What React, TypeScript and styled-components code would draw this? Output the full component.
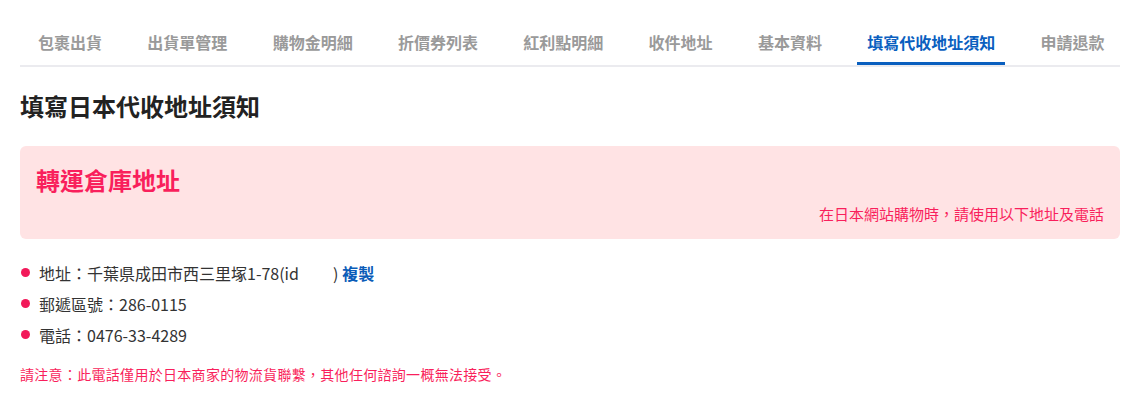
import React from "react";
import styled, { createGlobalStyle } from "styled-components";

const GlobalStyle = createGlobalStyle`
  html, body {
    margin: 0;
    padding: 0;
    background: #ffffff;
  }
  body {
    font-family: "Noto Sans CJK TC", "Noto Sans", sans-serif;
    color: #333333;
  }
`;

const Page = styled.div`
  padding: 0 28px 0 20px;
  width: 1100px;
`;

const Tabs = styled.nav`
  display: flex;
  gap: 25.3px;
  margin-top: 22px;
  padding-left: 8px;
  border-bottom: 2px solid #ebebef;
`;

const Tab = styled.a<{ $active?: boolean }>`
  display: block;
  padding: 0 10px;
  line-height: 40px;
  font-size: 16px;
  font-weight: 700;
  color: ${(p) => (p.$active ? "#0a5fbf" : "#9a9a9a")};
  border-bottom: 3px solid ${(p) => (p.$active ? "#0a5fbf" : "transparent")};
  text-decoration: none;
  white-space: nowrap;
  cursor: pointer;
`;

const Title = styled.h1`
  margin: 23px 0 0;
  font-size: 24px;
  line-height: 32px;
  font-weight: 700;
  color: #222222;
`;

const Notice = styled.section`
  margin-top: 24px;
  padding: 18px 16px 15px;
  background: #ffe3e4;
  border-radius: 6px;
  display: flex;
  flex-direction: column;
  gap: 8px;
`;

const NoticeTitle = styled.h2`
  margin: 0;
  font-size: 24px;
  line-height: 32px;
  font-weight: 700;
  color: #f91f5c;
`;

const NoticeSub = styled.p`
  margin: 0;
  text-align: right;
  font-size: 15px;
  line-height: 20px;
  color: #f91f5c;
`;

const List = styled.ul`
  list-style: none;
  margin: 19px 0 0;
  padding: 0;
`;

const Item = styled.li`
  display: flex;
  align-items: center;
  gap: 9px;
  font-size: 16px;
  line-height: 31px;
  color: #333333;
`;

const Bullet = styled.span`
  flex: none;
  width: 9px;
  height: 9px;
  margin-left: 1px;
  margin-top: -3px;
  border-radius: 50%;
  background: #f2195a;
`;

const Masked = styled.span`
  display: inline-block;
  width: 34px;
`;

const CopyLink = styled.a`
  margin-left: 4px;
  font-weight: 700;
  color: #0a5cb8;
  text-decoration: none;
  cursor: pointer;
`;

const Caution = styled.p`
  margin: 13px 0 0;
  font-size: 14px;
  line-height: 20px;
  letter-spacing: 0.3px;
  color: #f91f5c;
`;

const tabs = [
  "包裹出貨",
  "出貨單管理",
  "購物金明細",
  "折價券列表",
  "紅利點明細",
  "收件地址",
  "基本資料",
  "填寫代收地址須知",
  "申請退款",
];

export default function App() {
  return (
    <>
      <GlobalStyle />
      <Page>
        <Tabs>
          {tabs.map((t) => (
            <Tab key={t} $active={t === "填寫代收地址須知"}>
              {t}
            </Tab>
          ))}
        </Tabs>
        <Title>填寫日本代收地址須知</Title>
        <Notice>
          <NoticeTitle>轉運倉庫地址</NoticeTitle>
          <NoticeSub>在日本網站購物時，請使用以下地址及電話</NoticeSub>
        </Notice>
        <List>
          <Item>
            <Bullet />
            <span>
              地址：千葉県成田市西三里塚1-78(id<Masked />)
              <CopyLink>複製</CopyLink>
            </span>
          </Item>
          <Item>
            <Bullet />
            <span>郵遞區號：286-0115</span>
          </Item>
          <Item>
            <Bullet />
            <span>電話：0476-33-4289</span>
          </Item>
        </List>
        <Caution>
          請注意：此電話僅用於日本商家的物流貨聯繫，其他任何諮詢一概無法接受。
        </Caution>
      </Page>
    </>
  );
}
